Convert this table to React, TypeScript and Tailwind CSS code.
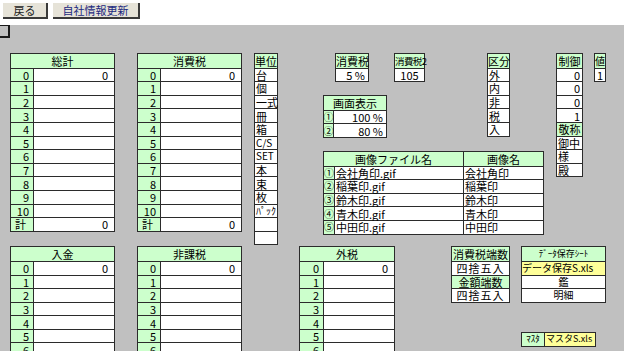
import React from "react";

const FONT = { fontFamily: '"Noto Sans CJK JP", "Noto Sans", sans-serif' };
const LINE = "border-[#2b2b2b]";

type CellProps = {
  children?: React.ReactNode;
  className?: string;
};

// one row of a sheet table; the first row has no top rule
const Row: React.FC<CellProps & { first?: boolean }> = ({ children, className = "", first }) => (
  <div className={`flex h-[13.6px] ${first ? "" : `border-t ${LINE}`} ${className}`}>{children}</div>
);

const Cell: React.FC<CellProps> = ({ children, className = "" }) => (
  <div className={`flex items-center whitespace-nowrap leading-[12px] ${className}`}>{children}</div>
);

const Box: React.FC<CellProps> = ({ children, className = "" }) => (
  <div className={`border ${LINE} shrink-0 ${className}`}>{children}</div>
);

const numberRows = ["0", "1", "2", "3", "4", "5", "6", "7", "8", "9", "10"];

const TotalTable: React.FC<{ title: string; numW: string; w: string }> = ({ title, numW, w }) => (
  <Box className={w}>
    <Row first className="bg-[#ccffcc]">
      <Cell className="flex-1 justify-center">{title}</Cell>
    </Row>
    {numberRows.map((n) => (
      <Row key={n}>
        <Cell className={`${numW} bg-[#ccffcc] justify-end pr-[4px] border-r ${LINE}`}>{n}</Cell>
        <Cell className="flex-1 bg-white justify-end pr-[6px]">{n === "0" ? "0" : ""}</Cell>
      </Row>
    ))}
    <Row>
      <Cell className={`${numW} bg-[#ccffcc] pl-[4px] border-r ${LINE}`}>計</Cell>
      <Cell className="flex-1 bg-white justify-end pr-[6px]">0</Cell>
    </Row>
  </Box>
);

const Circle: React.FC<{ c: string; w: string }> = ({ c, w }) => (
  <Cell className={`${w} bg-[#ccffcc] justify-center border-r ${LINE}`}>
    <span className="text-[10px] leading-none">{c}</span>
  </Cell>
);

const units = ["台", "個", "一式", "冊", "箱", "C/S", "SET", "本", "束", "枚", "ﾊﾟｯｸ", "", ""];
const kubun = ["外", "内", "非", "税", "入"];
const images = [
  ["①", "会社角印.gif", "会社角印"],
  ["②", "稲葉印.gif", "稲葉印"],
  ["③", "鈴木印.gif", "鈴木印"],
  ["④", "青木印.gif", "青木印"],
  ["⑤", "中田印.gif", "中田印"],
];

export default function App() {
  return (
    <div className="w-[624px] h-[351px] overflow-hidden bg-[#c0c0c0] text-[11px] leading-none text-black" style={FONT}>
      {/* toolbar */}
      <div className="h-[25px] bg-white flex items-start gap-[5px] pl-[3px] pt-[3px]">
        <button className="w-[45px] h-[16px] bg-[#e6e3d8] border-r-2 border-b-2 border-[#3a3a3a] text-[11px] leading-none text-[#222]">
          戻る
        </button>
        <button className="w-[87px] h-[16px] bg-[#e6e3d8] border-r-2 border-b-2 border-[#3a3a3a] text-[11px] leading-none text-[#1c2a80]">
          自社情報更新
        </button>
      </div>

      {/* sheet */}
      <div className="w-[11px] h-[13px] border-t border-r-2 border-b-2 border-[#1a1a1a] -ml-[1px]" />

      <div className="flex items-start mt-[15px] pl-[10px]">
        <TotalTable title="総計" numW="w-[23px]" w="w-[105px]" />
        <div className="ml-[22px]">
          <TotalTable title="消費税" numW="w-[23px]" w="w-[105px]" />
        </div>

        {/* 単位 */}
        <Box className="ml-[12px] w-[24px]">
          <Row first className="bg-[#ccffcc]">
            <Cell className="flex-1 justify-center">単位</Cell>
          </Row>
          {units.map((u, i) => (
            <Row key={i} className="bg-white">
              <Cell className={`flex-1 pl-[1px] ${u === "ﾊﾟｯｸ" || u === "C/S" || u === "SET" ? "text-[10px]" : ""}`}>{u}</Cell>
            </Row>
          ))}
        </Box>

        {/* right block */}
        <div className="ml-[45px] w-[221px]">
          <div className="flex items-start">
            <div className="w-[102px]">
              <div className="flex items-start pl-[12px]">
                <Box className="w-[34px]">
                  <Row first className="bg-[#ccffcc]">
                    <Cell className="flex-1 justify-center">消費税</Cell>
                  </Row>
                  <Row className="bg-white">
                    <Cell className="flex-1 justify-end pr-[3px]">5 %</Cell>
                  </Row>
                </Box>
                <Box className="ml-[25px] w-[31px]">
                  <Row first className="bg-[#ccffcc]">
                    <Cell className="flex-1 justify-center text-[9.5px] tracking-[-0.6px]">消費税2</Cell>
                  </Row>
                  <Row className="bg-white">
                    <Cell className="flex-1 justify-center">105</Cell>
                  </Row>
                </Box>
              </div>
              <Box className="mt-[13px] w-[64px]">
                <Row first className="bg-[#ccffcc]">
                  <Cell className="flex-1 justify-center">画面表示</Cell>
                </Row>
                {[
                  ["①", "100 %"],
                  ["②", "80 %"],
                ].map(([c, v]) => (
                  <Row key={c}>
                    <Circle c={c} w="w-[10px]" />
                    <Cell className="flex-1 bg-white justify-end pr-[3px]">{v}</Cell>
                  </Row>
                ))}
              </Box>
            </div>

            <Box className="ml-[62px] w-[23px]">
              <Row first className="bg-[#ccffcc]">
                <Cell className="flex-1 justify-center">区分</Cell>
              </Row>
              {kubun.map((k) => (
                <Row key={k} className="bg-white">
                  <Cell className="flex-1 pl-[1px]">{k}</Cell>
                </Row>
              ))}
            </Box>
          </div>

          <Box className="mt-[13px] w-[221px]">
            <Row first className="bg-[#ccffcc]">
              <Cell className={`w-[140px] justify-center border-r ${LINE}`}>画像ファイル名</Cell>
              <Cell className="flex-1 justify-center">画像名</Cell>
            </Row>
            {images.map(([c, f, n]) => (
              <Row key={c}>
                <Circle c={c} w="w-[11px]" />
                <Cell className={`w-[129px] bg-white pl-[1px] border-r ${LINE}`}>{f}</Cell>
                <Cell className="flex-1 bg-white pl-[1px]">{n}</Cell>
              </Row>
            ))}
          </Box>
        </div>

        {/* 制御 */}
        <Box className="ml-[12px] w-[27px]">
          <Row first className="bg-[#ccffcc]">
            <Cell className="flex-1 justify-center">制御</Cell>
          </Row>
          {["0", "0", "0", "1"].map((v, i) => (
            <Row key={i} className="bg-white">
              <Cell className="flex-1 justify-end pr-[2px]">{v}</Cell>
            </Row>
          ))}
          <Row className="bg-[#ccffcc]">
            <Cell className="flex-1 justify-center">敬称</Cell>
          </Row>
          {["御中", "様", "殿"].map((v) => (
            <Row key={v} className="bg-white">
              <Cell className="flex-1 pl-[1px]">{v}</Cell>
            </Row>
          ))}
        </Box>

        {/* 値 */}
        <Box className="ml-[11px] w-[12px]">
          <Row first className="bg-[#ccffcc]">
            <Cell className="flex-1 justify-center text-[10px]">値</Cell>
          </Row>
          <Row className="bg-white">
            <Cell className="flex-1 justify-center">1</Cell>
          </Row>
        </Box>
      </div>

      <div className="flex items-start mt-[1px] pl-[10px]">
        <TotalTable title="入金" numW="w-[23px]" w="w-[105px]" />
        <div className="ml-[22px]">
          <TotalTable title="非課税" numW="w-[23px]" w="w-[105px]" />
        </div>
        <div className="ml-[57px]">
          <TotalTable title="外税" numW="w-[24px]" w="w-[96px]" />
        </div>

        <Box className="ml-[56px] w-[59px]">
          <Row first className="bg-[#ccffcc]">
            <Cell className="flex-1 justify-center">消費税端数</Cell>
          </Row>
          <Row className="bg-white">
            <Cell className="flex-1 justify-center tracking-[1px]">四捨五入</Cell>
          </Row>
          <Row className="bg-[#ccffcc]">
            <Cell className="flex-1 justify-center">金額端数</Cell>
          </Row>
          <Row className="bg-white">
            <Cell className="flex-1 justify-center tracking-[1px]">四捨五入</Cell>
          </Row>
        </Box>

        <div className="ml-[11px] w-[85px]">
          <Box className="w-[85px]">
            <Row first className="bg-[#ccffcc]">
              <Cell className="flex-1 justify-center text-[9px]">ﾃﾞｰﾀ保存ｼｰﾄ</Cell>
            </Row>
            <Row className="bg-[#ffff99]">
              <Cell className="flex-1 text-[10px]">データ保存S.xls</Cell>
            </Row>
            <Row className="bg-white">
              <Cell className="flex-1 justify-center text-[10px]">鑑</Cell>
            </Row>
            <Row className="bg-white">
              <Cell className="flex-1 justify-center text-[10px]">明細</Cell>
            </Row>
          </Box>
          <Box className="mt-[29px] w-[75px]">
            <Row first>
              <Cell className={`w-[23px] bg-[#ccffcc] justify-center text-[9px] border-r ${LINE}`}>ﾏｽﾀ</Cell>
              <Cell className="flex-1 bg-[#ffff99] pl-[1px] text-[9px]">マスタS.xls</Cell>
            </Row>
          </Box>
        </div>
      </div>
    </div>
  );
}
